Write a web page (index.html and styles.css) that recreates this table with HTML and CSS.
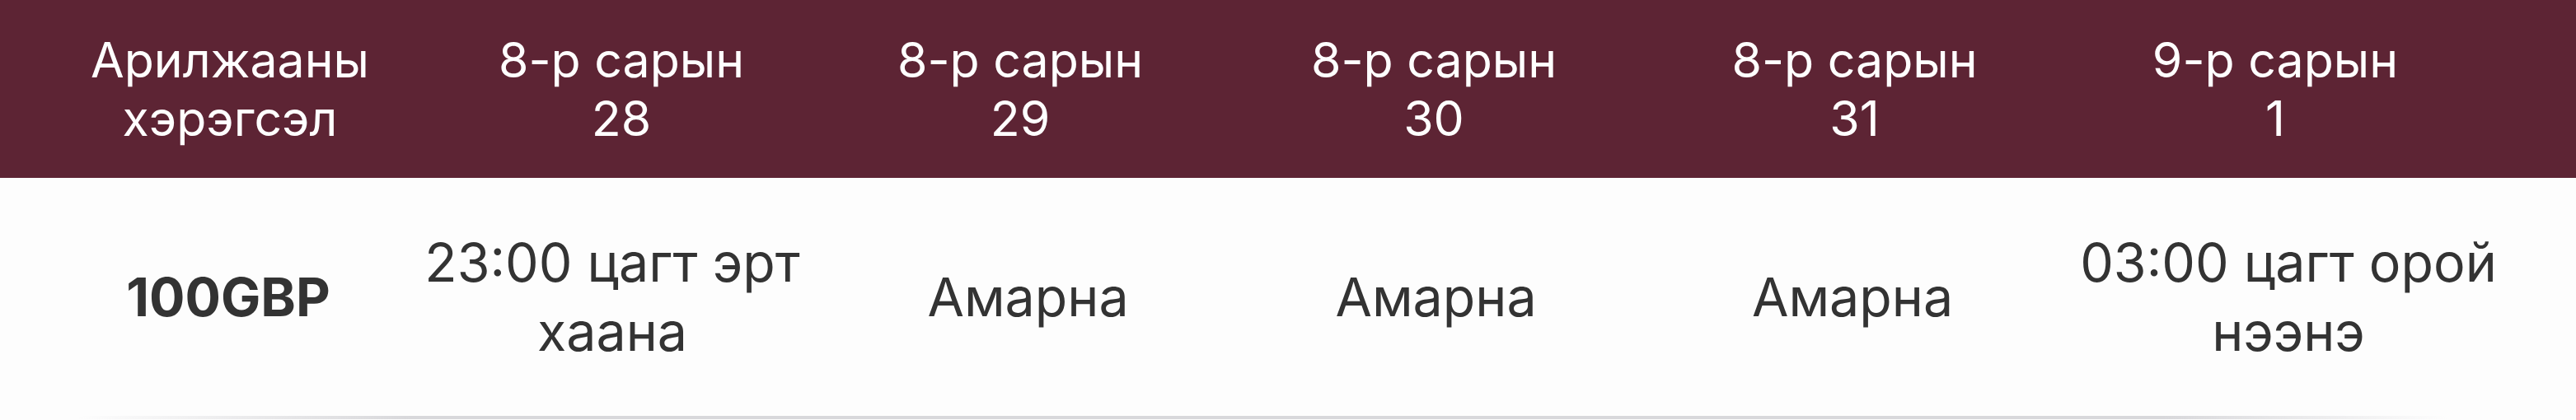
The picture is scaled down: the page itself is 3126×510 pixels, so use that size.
FILE: index.html
```html
<!DOCTYPE html>
<html lang="mn">
<head>
<meta charset="utf-8">
<title>Арилжааны цагийн хуваарь</title>
<link rel="stylesheet" href="styles.css">
</head>
<body>
<div class="schedule">
  <div class="row head">
    <div class="cell"><span class="ln">Арилжааны</span><span class="ln">хэрэгсэл</span></div>
    <div class="cell"><span class="ln">8-р сарын</span><span class="ln">28</span></div>
    <div class="cell"><span class="ln">8-р сарын</span><span class="ln">29</span></div>
    <div class="cell"><span class="ln">8-р сарын</span><span class="ln">30</span></div>
    <div class="cell"><span class="ln">8-р сарын</span><span class="ln">31</span></div>
    <div class="cell"><span class="ln">9-р сарын</span><span class="ln">1</span></div>
  </div>
  <div class="row body">
    <div class="cell instrument">100GBP</div>
    <div class="cell">23:00 цагт эрт хаана</div>
    <div class="cell">Амарна</div>
    <div class="cell">Амарна</div>
    <div class="cell">Амарна</div>
    <div class="cell">03:00 цагт орой нээнэ</div>
  </div>
  <div class="rule"></div>
</div>
</body>
</html>
```

FILE: styles.css
```css
html, body {
  margin: 0;
  padding: 0;
  background: #fdfdfd;
}

.schedule {
  font-family: Inter, "Noto Sans", sans-serif;
  width: 3126px;
}

.row {
  display: grid;
}

.cell {
  display: flex;
  flex-direction: column;
  align-items: center;
  justify-content: center;
  text-align: center;
}

.ln {
  display: block;
}

.head {
  grid-template-columns: 474px 476px 492px 512px 509px 512px;
  padding-left: 42px;
  background: #5d2434;
  color: #ffffff;
  height: 216px;
  font-size: 59px;
  line-height: 71px;
}

.body {
  grid-template-columns: 430px 502px 507px 483px 528px 530px;
  padding-left: 62px;
  height: 289px;
  color: #333333;
  font-size: 64.5px;
  line-height: 84px;
}

.instrument {
  font-weight: 700;
}

.rule {
  height: 4px;
  background: linear-gradient(90deg, rgba(214,214,218,0) 3%, #d8d8db 16%, #d8d8db 84%, rgba(214,214,218,0) 95%);
}
```
